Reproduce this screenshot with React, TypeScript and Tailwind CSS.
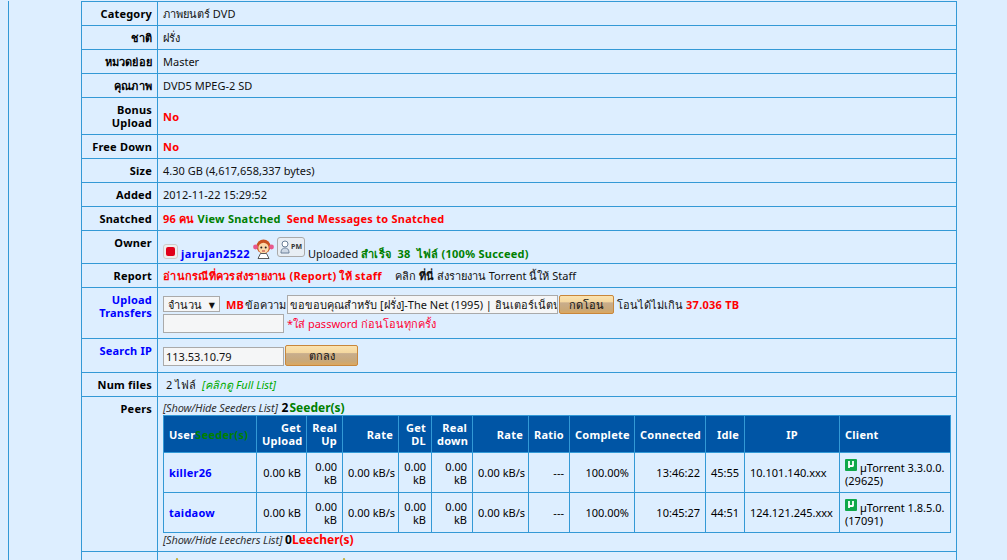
import React from "react";

const th = "border border-[#3399d6] bg-[#0055a5] text-white font-bold tracking-[0.25px] px-[5px] leading-[13px]";
const td = "border border-[#3399d6] px-[5px] leading-[13px]";
const lab = "border border-[#3399d6] text-right font-bold tracking-[0.2px] align-top pr-[5px] pl-1 pt-[5px] leading-[13px]";
const val = "border border-[#3399d6] px-[5px] leading-[13px] text-[#111] [&_b]:tracking-[0.25px]";

function Mu() {
  return (
    <svg width="12" height="12" viewBox="0 0 12 12" className="inline-block align-[1px] mr-[3px]">
      <rect width="12" height="12" rx="1" fill="#10a84a" />
      <path d="M4 2v7M8 2v5.5M4 7h4" stroke="#fff" strokeWidth="1.8" fill="none" />
    </svg>
  );
}

function Star() {
  return (
    <svg width="12" height="12" viewBox="0 0 12 12" className="inline-block">
      <path d="M6 0l1.8 4H12L8.6 6.8 10 11 6 8.4 2 11l1.4-4.2L0 4h4.2z" fill="#f2d21b" stroke="#a98d10" strokeWidth="0.6" />
    </svg>
  );
}

const peers = [
  ["killer26", "13:46:22", "45:55", "10.101.140.xxx", "µTorrent 3.3.0.0.", "(29625)"],
  ["taidaow", "10:45:27", "44:51", "124.121.245.xxx", "µTorrent 1.8.5.0.", "(17091)"],
];

const widths = [93, 50, 36, 56, 33, 41, 56, 41, 65, 71, 39, 95, 111];
const btn = "rounded-[2px] border border-[#c8873c] bg-[linear-gradient(#fbe3b0_0,#f4d79f_35%,#c8ad8c_40%,#c9a878_80%,#dca860_100%)] text-center";
const input = "bg-[#f5f6f7] border border-[#aaa]";

export default function App() {
  return (
    <div className="h-[560px] overflow-hidden bg-[#ddeeff] text-[11px] text-black" style={{ fontFamily: '"Noto Sans", "DejaVu Sans", sans-serif' }}>
      <div className="ml-2 w-[949px] h-full border-x border-[#3399d6] pl-[72px]">
        <table className="w-[876px] table-fixed border-collapse mt-px">
          <colgroup>
            <col className="w-[76px]" />
            <col />
          </colgroup>
          <tbody>
            <tr className="h-6"><td className={lab}>Category</td><td className={val}>ภาพยนตร์ DVD</td></tr>
            <tr className="h-6"><td className={lab}>ชาติ</td><td className={val}>ฝรั่ง</td></tr>
            <tr className="h-6"><td className={lab}>หมวดย่อย</td><td className={val}>Master</td></tr>
            <tr className="h-6"><td className={lab}>คุณภาพ</td><td className={val}>DVD5 MPEG-2 SD</td></tr>
            <tr className="h-[37px]"><td className={lab}>Bonus Upload</td><td className={val}><b className="text-[#ff0000]">No</b></td></tr>
            <tr className="h-6"><td className={lab}>Free Down</td><td className={val}><b className="text-[#ff0000]">No</b></td></tr>
            <tr className="h-6"><td className={lab}>Size</td><td className={val}>4.30 GB (4,617,658,337 bytes)</td></tr>
            <tr className="h-6"><td className={lab}>Added</td><td className={val}>2012-11-22 15:29:52</td></tr>
            <tr className="h-6">
              <td className={lab}>Snatched</td>
              <td className={val}><b className="text-[#ff0000]">96 คน</b> <b className="text-[#008000]">View Snatched</b> <b className="text-[#ff0000] ml-[3px]">Send Messages to Snatched</b></td>
            </tr>
            <tr className="h-[33px]">
              <td className={lab}>Owner</td>
              <td className={val}>
                <span className="inline-flex items-end gap-[3px] translate-y-[1px]">
                  <span className="w-[15px] h-[15px] rounded-[3px] bg-[#eee] border border-[#ccc] flex items-center justify-center mb-[1px]"><span className="w-[9px] h-[9px] rounded-[2px] bg-[#e0001a]" /></span>
                  <span className="font-bold text-[#0000ff] tracking-[0.45px]">jarujan2522</span>
                  <svg width="21" height="20" viewBox="0 0 21 20" className="mb-[1px]">
                    <circle cx="10.5" cy="7.5" r="7" fill="#c9531f" />
                    <circle cx="2.5" cy="8" r="2.4" fill="#e8588c" />
                    <circle cx="18.5" cy="8" r="2.4" fill="#e8588c" />
                    <circle cx="10.5" cy="9" r="5.2" fill="#fbd9a8" />
                    <circle cx="8.3" cy="8.5" r="1" fill="#222" />
                    <circle cx="12.7" cy="8.5" r="1" fill="#222" />
                    <path d="M9 12h3" stroke="#b33" />
                    <path d="M5 19.5l2.5-5h6l2.5 5z" fill="#fff" stroke="#333" strokeWidth="0.8" />
                  </svg>
                  <span className="w-7 h-5 rounded-[3px] bg-[#e8eef4] border border-[#aaa] flex items-center justify-center gap-[1px] mb-[3px]">
                    <svg width="10" height="14" viewBox="0 0 10 14"><circle cx="5" cy="4" r="3" fill="#fff" stroke="#6a7f98" /><path d="M1 13c0-4 2-5 4-5s4 1 4 5z" fill="#cfd9e6" stroke="#6a7f98" /></svg>
                    <span className="text-[7px] font-bold text-[#333] leading-none">PM</span>
                  </span>
                  <span>Uploaded <b className="text-[#008000]">สำเร็จ &nbsp;38 &nbsp;ไฟล์ (100% Succeed)</b></span>
                </span>
              </td>
            </tr>
            <tr className="h-6">
              <td className={lab}>Report</td>
              <td className={val}><b className="text-[#ff0000]">อ่านกรณีที่ควรส่งรายงาน (Report) ให้ staff</b> <span className="ml-[10px]">คลิก <b>ที่นี่</b> ส่งรายงาน Torrent นี้ให้ Staff</span></td>
            </tr>
            <tr className="h-[51px]">
              <td className={`${lab} text-[#0000ff]`}>Upload Transfers</td>
              <td className={`${val} pt-px`}>
                <div className="flex items-center gap-[3px] h-[19px]">
                  <span className={`w-[57px] h-4 shrink-0 flex items-center justify-between px-[4px] ${input}`}>จำนวน <span className="text-[8px]">▼</span></span>
                  <b className="text-[#ff0000] ml-[3px]">MB</b>
                  <span className="-ml-[2px]">ข้อความ</span>
                  <span className={`w-[271px] h-[19px] shrink-0 -ml-[2px] overflow-hidden whitespace-nowrap px-[2px] leading-[17px] ${input}`}>ขอขอบคุณสำหรับ [ฝรั่ง]-The Net (1995) | อินเตอร์เน็ตนรก</span>
                  <span className={`w-[55px] h-[19px] shrink-0 -ml-[2px] leading-[17px] ${btn}`}>กดโอน</span>
                  <span>โอนได้ไม่เกิน <b className="text-[#ff0000]">37.036 TB</b></span>
                </div>
                <div className="flex items-center gap-[3px] h-[19px]">
                  <span className={`w-[121px] h-[19px] ${input}`} />
                  <span className="text-[#ff0033]">*ใส่ password ก่อนโอนทุกครั้ง</span>
                </div>
              </td>
            </tr>
            <tr className="h-[34px]">
              <td className={`${lab} text-[#0000ff]`}>Search IP</td>
              <td className={val}>
                <div className="flex items-center gap-[1px]">
                  <span className={`w-[121px] h-[19px] px-[2px] leading-[17px] mt-[2px] ${input}`}>113.53.10.79</span>
                  <span className={`w-[73px] h-[21px] leading-[19px] ${btn}`}>ตกลง</span>
                </div>
              </td>
            </tr>
            <tr className="h-6">
              <td className={lab}>Num files</td>
              <td className={val}><span className="ml-[3px]">2 ไฟล์</span> <i className="text-[#00aa00] ml-[3px]">[คลิกดู Full List]</i></td>
            </tr>
            <tr className="h-[155px]">
              <td className={lab}>Peers</td>
              <td className="border border-[#3399d6] px-[5px] pt-[4px] align-top leading-[13px]">
                <div className="h-[14px] whitespace-nowrap"><i className="text-[#333] tracking-[-0.15px]">[Show/Hide Seeders List]</i> <b className="text-[12px] ml-[1px] mr-[1px]">2</b><b className="text-[#008000] text-[12px]">Seeder(s)</b></div>
                <table className="w-[787px] table-fixed border-collapse">
                  <colgroup>
                    {widths.map((w, i) => <col key={i} style={{ width: w }} />)}
                  </colgroup>
                  <thead>
                    <tr className="h-[37px]">
                      <th className={`${th} text-left`}>User<span className="text-[#008000]">Seeder(s)</span></th>
                      <th className={`${th} text-right`}>Get Upload</th>
                      <th className={`${th} text-right`}>Real Up</th>
                      <th className={`${th} text-right`}>Rate</th>
                      <th className={`${th} text-right`}>Get DL</th>
                      <th className={`${th} text-right`}>Real down</th>
                      <th className={`${th} text-right`}>Rate</th>
                      <th className={`${th} text-right`}>Ratio</th>
                      <th className={`${th} text-right`}>Complete</th>
                      <th className={`${th} text-right`}>Connected</th>
                      <th className={`${th} text-right`}>Idle</th>
                      <th className={`${th} text-center`}>IP</th>
                      <th className={`${th} text-left`}>Client</th>
                    </tr>
                  </thead>
                  <tbody>
                    {peers.map((p) => (
                      <tr key={p[0]} className="h-10">
                        <td className={td}><b className="text-[#0000ff] tracking-[0.25px]">{p[0]}</b></td>
                        <td className={`${td} text-right whitespace-nowrap`}>0.00 kB</td>
                        <td className={`${td} text-right`}>0.00 kB</td>
                        <td className={`${td} text-right whitespace-nowrap`}>0.00 kB/s</td>
                        <td className={`${td} text-right`}>0.00 kB</td>
                        <td className={`${td} text-right`}>0.00 kB</td>
                        <td className={`${td} text-right whitespace-nowrap`}>0.00 kB/s</td>
                        <td className={`${td} text-right`}>---</td>
                        <td className={`${td} text-right`}>100.00%</td>
                        <td className={`${td} text-right`}>{p[1]}</td>
                        <td className={`${td} text-right`}>{p[2]}</td>
                        <td className={`${td} whitespace-nowrap`}>{p[3]}</td>
                        <td className={`${td} whitespace-nowrap`}><Mu />{p[4]}<br />{p[5]}</td>
                      </tr>
                    ))}
                  </tbody>
                </table>
                <div className="h-[14px] whitespace-nowrap"><i className="text-[#333] tracking-[-0.15px]">[Show/Hide Leechers List]</i> <b className="text-[12px]">0</b><b className="text-[#ff0000] text-[12px]">Leecher(s)</b></div>
              </td>
            </tr>
            <tr className="h-6">
              <td className={lab}>Rating</td>
              <td className={`${val} align-top pt-[6px]`}>
                <div className="flex pl-[8px] gap-[155px]"><Star /><Star /></div>
              </td>
            </tr>
          </tbody>
        </table>
      </div>
    </div>
  );
}
